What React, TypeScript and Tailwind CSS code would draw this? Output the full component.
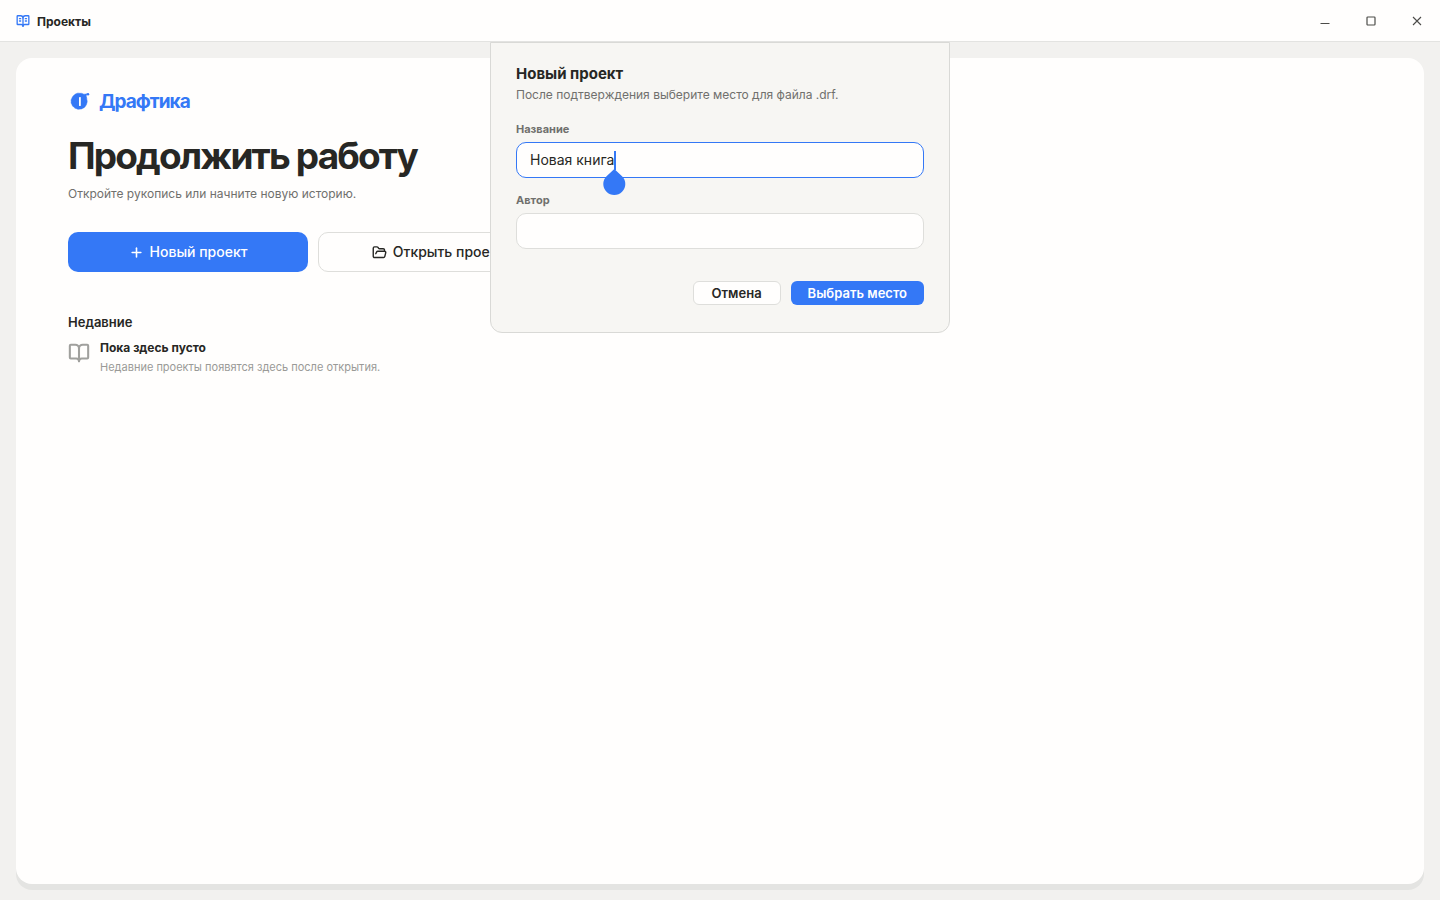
import React, { useState } from 'react';
import { BookOpen, BookOpenText, FolderOpen, Plus } from 'lucide-react';

const LogoMark: React.FC = () => (
  <svg width="22" height="22" viewBox="0 0 22 22" aria-hidden="true">
    <path
      d="M8.700 2.500c1-.6 2.200-.3 3.300-.2 1.200-.2 2.300 0 3.200.7 1.200.4 2.600.1 3.900-.3-.5 1-1 1.800-.8 2.900.6 1.100.4 2.200.6 3.300.5 1.100.3 2.200-.1 3.300-.1 1.200-.7 2.100-1.400 3-.5 1-1.400 1.600-2.500 2-.9.700-2 1-3.100.9-1.100.4-2.200.1-3.200-.4-1.200-.1-2.200-.7-2.900-1.600-1-.7-1.600-1.600-1.800-2.700-.7-.9-1-1.900-.7-3-.3-1.100 0-2.200.7-3.100.2-1.200.8-2.100 1.800-2.700.7-1 1.700-1.700 3-2.100Z"
      fill="#3478f6"
      stroke="#3478f6"
      strokeWidth=".5"
    />
    <circle cx="20" cy="3.300" r="1.200" fill="#3478f6" />
    <rect x="11" y="6" width="1.800" height="9" rx=".4" fill="#fffefd" />
  </svg>
);

const TitleBar: React.FC = () => (
  <header className="flex h-[42px] shrink-0 items-center justify-between border-b border-[#e3e3e1] bg-[#fffefd] pl-4">
    <div className="flex items-center gap-[7px]">
      <BookOpenText size={14} strokeWidth={2.25} className="text-[#3478f6]" />
      <span className="pt-[2px] text-xs font-bold">Проекты</span>
    </div>
    <div className="flex h-full text-[#4c4c49]">
      <button type="button" aria-label="Свернуть" className="flex w-[46px] items-center justify-center">
        <svg width="10" height="10" viewBox="0 0 10 10" stroke="currentColor">
          <path d="M.5 7.500h9" />
        </svg>
      </button>
      <button type="button" aria-label="Развернуть" className="flex w-[46px] items-center justify-center">
        <svg width="10" height="10" viewBox="0 0 10 10" fill="none" stroke="currentColor" strokeWidth="1.200">
          <rect x="1" y="1" width="8" height="8" rx=".8" />
        </svg>
      </button>
      <button type="button" aria-label="Закрыть" className="flex w-[46px] items-center justify-center">
        <svg width="10" height="10" viewBox="0 0 10 10" stroke="currentColor" strokeWidth="1.100">
          <path d="m1 1 8 8M9 1 1 9" />
        </svg>
      </button>
    </div>
  </header>
);

const Welcome: React.FC = () => (
  <main className="mx-4 mt-4 mb-4 flex-1 rounded-2xl bg-[#fffefd] px-[52px] pt-8 shadow-[0_6px_0_#e4e4e2]">
    <div className="flex items-center gap-[9px]">
      <LogoMark />
      <span className="text-[19px] leading-6 font-bold tracking-tighter text-[#3478f6]">Драфтика</span>
    </div>
    <h1 className="mt-5 text-[37px] leading-[44px] font-bold tracking-tighter">Продолжить работу</h1>
    <p className="mt-2 text-xs leading-4 text-[#70706d]">Откройте рукопись или начните новую историю.</p>

    <div className="mt-[30px] flex gap-[10px]">
      <button type="button" className="flex h-10 w-60 items-center justify-center gap-[6px] rounded-[10px] bg-[#3478f6] text-sm font-medium text-white">
        <Plus size={15} strokeWidth={2.5} />
        Новый проект
      </button>
      <button type="button" className="flex h-10 w-60 items-center justify-center gap-[6px] rounded-[10px] border border-[#dededb] text-sm font-medium">
        <FolderOpen size={15} strokeWidth={2.25} />
        Открыть проект
      </button>
    </div>

    <h2 className="mt-10 text-[13px] leading-5 font-semibold">Недавние</h2>
    <div className="mt-[6px] flex gap-[10px]">
      <BookOpen size={22} strokeWidth={2.25} className="mt-1 text-[#a0a09d]" />
      <div>
        <p className="text-xs leading-5 font-bold">Пока здесь пусто</p>
        <p className="text-[11px] leading-[18px] text-[#9a9a97]">Недавние проекты появятся здесь после открытия.</p>
      </div>
    </div>
  </main>
);

const NewProjectSheet: React.FC = () => {
  const [title, setTitle] = useState('Новая книга');
  const [author, setAuthor] = useState('');

  return (
    <form
      role="dialog"
      aria-labelledby="sheet-title"
      onSubmit={(e) => e.preventDefault()}
      className="absolute inset-x-0 top-[42px] mx-auto w-[460px] rounded-b-xl border border-[#d9d9d6] bg-[#f7f6f3] px-[25px] pt-5 pb-[27px]"
    >
      <h2 id="sheet-title" className="text-[15px] leading-[22px] font-bold">Новый проект</h2>
      <p className="text-xs leading-5 text-[#70706d]">После подтверждения выберите место для файла .drf.</p>

      <label htmlFor="title" className="mt-4 block text-[11px] leading-4 font-bold text-[#70706d]">Название</label>
      <div className="relative mt-[5px]">
        <input
          id="title"
          value={title}
          onChange={(e) => setTitle(e.target.value)}
          className="block h-9 w-full rounded-[10px] border border-[#3478f6] bg-[#fffefd] px-[13px] pb-[2px] text-sm outline-none"
        />
        {/* text caret with its touch handle */}
        <svg width="24" height="45" viewBox="0 0 24 45" fill="#3478f6" aria-hidden="true" className="pointer-events-none absolute top-2 left-[86px]">
          <path d="M12 1h2v19h-2z" />
          <path d="m12.300 19 7.780 7.200a11 11 0 1 1-15.560 0Z" />
        </svg>
      </div>

      <label htmlFor="author" className="mt-[14px] block text-[11px] leading-4 font-bold text-[#70706d]">Автор</label>
      <input
        id="author"
        value={author}
        onChange={(e) => setAuthor(e.target.value)}
        className="mt-[5px] block h-9 w-full rounded-[10px] border border-[#dededb] bg-[#fffefd] px-[13px] pb-[2px] text-sm outline-none"
      />

      <div className="mt-8 flex justify-end gap-[10px]">
        <button type="button" className="h-6 rounded-md border border-[#dededb] bg-[#fffefd] px-[18px] text-[13px] leading-5 font-semibold">Отмена</button>
        <button type="submit" className="h-6 rounded-md bg-[#3478f6] px-[17px] text-[13px] leading-5 font-semibold text-white">Выбрать место</button>
      </div>
    </form>
  );
};

export default function App() {
  return (
    <div className="relative flex min-h-screen flex-col bg-[#f2f1ef] font-['Inter',sans-serif] text-[#272724]">
      <TitleBar />
      <Welcome />
      <NewProjectSheet />
    </div>
  );
}
